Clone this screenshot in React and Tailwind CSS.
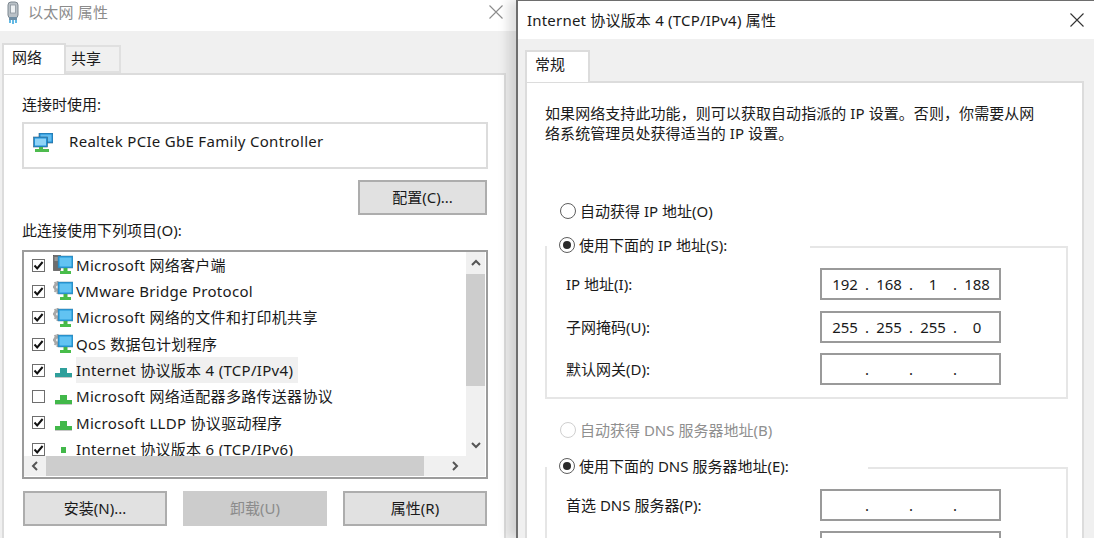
const FONT = "font-['Noto_Sans','Noto_Sans_CJK_SC',sans-serif]";

function CloseX({ color = "#8c8c8c" }) {
  return (
    <svg width="14" height="14" viewBox="0 0 14 14" fill="none" stroke={color} strokeWidth="1.1">
      <path d="M0.5 0.5 13.5 13.5M13.5 0.5 0.5 13.5" />
    </svg>
  );
}

function EthernetIcon() {
  return (
    <svg width="14" height="23" viewBox="0 0 14 23">
      <rect x="2" y="1" width="10" height="16" rx="3" fill="#b9c0c6" stroke="#7d8790" strokeWidth="1" />
      <rect x="4.5" y="4" width="5" height="8" fill="#eef1f3" stroke="#8a949c" strokeWidth="0.8" />
      <rect x="3" y="16" width="8" height="3" fill="#6f8da3" />
      <path d="M4 19v3M7 19v4M10 19v3" stroke="#31a3dc" strokeWidth="1.5" />
    </svg>
  );
}

function AdapterIcon() {
  return (
    <svg width="20" height="20" viewBox="0 0 20 20">
      <rect x="6" y="0" width="14" height="10" fill="#1f8fd6" stroke="#35617f" strokeWidth="0.6" />
      <rect x="7.5" y="1.5" width="11" height="7" fill="#62bdf0" />
      <rect x="0.5" y="4" width="14" height="10" fill="#1f8fd6" stroke="#35617f" strokeWidth="0.6" />
      <rect x="2" y="5.5" width="11" height="7" fill="#8fd4f7" />
      <rect x="6" y="14" width="4" height="3" fill="#4fb84f" />
      <rect x="2" y="16" width="14" height="3" fill="#4ebb4e" />
    </svg>
  );
}

function ClientIcon({ server }) {
  return (
    <svg width="20" height="20" viewBox="0 0 20 20" className="shrink-0">
      {server ? (
        <g>
          <rect x="0.5" y="0.5" width="7" height="15" fill="#6d6d6d" stroke="#444" strokeWidth="0.6" />
          <path d="M1.5 3h4M1.5 5h4" stroke="#d8d8d8" strokeWidth="0.8" />
        </g>
      ) : (
        <g fill="#a8a8a8">
          <circle cx="4.5" cy="6" r="4.2" />
          <path d="M3.5 0h2v2.5h-2zM0 5h2.5v2H0zM3.5 10h2v3h-2zM0.8 1.8l1.4-1.4 1.6 1.6-1.4 1.4zM0.8 10.2l1.4 1.4 1.6-1.6-1.4-1.4z" />
          <circle cx="4.5" cy="6" r="1.6" fill="#e8e8e8" />
        </g>
      )}
      <rect x="5" y="1" width="15" height="12" fill="#2196d8" stroke="#45809f" strokeWidth="0.5" />
      <rect x="6.5" y="2.5" width="12" height="9" fill="#62c3f2" />
      <rect x="10.5" y="13" width="4" height="3" fill="#46b647" />
      <rect x="7" y="16" width="11" height="3" fill="#48bd4a" />
    </svg>
  );
}

function ProtocolIcon({ color = "#42b84a" }) {
  return (
    <svg width="20" height="20" viewBox="0 0 20 20" className="shrink-0">
      <rect x="7" y="8" width="7" height="5" fill={color} />
      <rect x="2" y="13" width="17" height="4" fill={color} />
      <rect x="2" y="17" width="17" height="1" fill="#c8c8c8" />
    </svg>
  );
}

function StubIcon() {
  return (
    <svg width="20" height="20" viewBox="0 0 20 20" className="shrink-0">
      <rect x="8" y="8" width="5" height="6" fill="#42b84a" />
    </svg>
  );
}

function Check({ checked }) {
  return (
    <span className="shrink-0 w-[13px] h-[13px] border border-[#6e6e6e] bg-white flex items-center justify-center">
      {checked && (
        <svg width="11" height="11" viewBox="0 0 11 11" fill="none" stroke="#111" strokeWidth="2">
          <path d="M1.5 5.5 4.2 8.4 9.6 2" />
        </svg>
      )}
    </span>
  );
}

function Chevron({ d }) {
  return (
    <svg width="12" height="12" viewBox="0 0 12 12" fill="none" stroke="#555" strokeWidth="2">
      <path d={d} />
    </svg>
  );
}

const rows = [
  { text: "Microsoft 网络客户端", on: true, icon: <ClientIcon server /> },
  { text: "VMware Bridge Protocol", on: true, icon: <ClientIcon /> },
  { text: "Microsoft 网络的文件和打印机共享", on: true, icon: <ClientIcon /> },
  { text: "QoS 数据包计划程序", on: true, icon: <ClientIcon /> },
  { text: "Internet 协议版本 4 (TCP/IPv4)", on: true, icon: <ProtocolIcon color="#2f9f9b" />, active: true },
  { text: "Microsoft 网络适配器多路传送器协议", on: false, icon: <ProtocolIcon /> },
  { text: "Microsoft LLDP 协议驱动程序", on: true, icon: <ProtocolIcon /> },
  { text: "Internet 协议版本 6 (TCP/IPv6)", on: true, icon: <StubIcon /> },
];

function Btn({ children, width, disabled }) {
  return (
    <div
      className={`h-[35px] flex items-center justify-center border-2 text-[15px] ${width} ${
        disabled ? "bg-[#cccccc] border-[#cccccc] text-[#8b8b8b]" : "bg-[#e1e1e1] border-[#adadad] text-[#1a1a1a]"
      }`}
    >
      {children}
    </div>
  );
}

function LeftDialog() {
  return (
    <div className="w-[516px] shrink-0 flex flex-col">
      <div className="h-[31px] shrink-0 bg-white flex items-center pl-[6px] pr-[13px] pb-[7px]">
        <EthernetIcon />
        <span className="ml-[8px] text-[15px] text-[#8c8c8c] tracking-[0.2px]">以太网 属性</span>
        <span className="ml-auto">
          <CloseX />
        </span>
      </div>
      <div className="flex-1 min-h-0 bg-[#f0f0f0] pl-[2px] pt-[12px] pr-[10px] flex flex-col">
        <div className="flex h-[30px] shrink-0 items-end">
          <div className="w-[64px] h-[31px] -mb-[1px] relative bg-white border-2 border-b-0 border-[#dcdcdc] text-[15px] text-[#1a1a1a] pl-[8px] pt-[1px]">
            网络
          </div>
          <div className="w-[55px] h-[28px] bg-[#f0f0f0] border-2 border-l-0 border-[#e0e0e0] text-[15px] text-[#1a1a1a] pl-[5px]">
            共享
          </div>
        </div>
        <div className="flex-1 min-h-0 bg-white border-t-2 border-l-2 border-r-2 border-[#dcdcdc] pl-[18px] pr-[16px] pt-[19px] flex flex-col">
          <div className="h-[20px] leading-[20px] text-[15px] text-[#1a1a1a]">连接时使用:</div>
          <div className="mt-[8px] h-[47px] border-2 border-[#dcdcdc] flex items-center pl-[9px]">
            <span className="-mt-[5px]">
              <AdapterIcon />
            </span>
            <span className="ml-[16px] text-[15px] tracking-[0.3px] text-[#1a1a1a] -mt-[8px]">Realtek PCIe GbE Family Controller</span>
          </div>
          <div className="mt-[11px] flex justify-end pr-[1px]">
            <Btn width="w-[129px]">配置(C)...</Btn>
          </div>
          <div className="mt-[5px] h-[20px] leading-[20px] text-[15px] text-[#1a1a1a]">此连接使用下列项目(O):</div>
          <div className="mt-[10px] h-[229px] shrink-0 border-2 border-[#9c9c9c] bg-white flex flex-col">
            <div className="flex flex-1 min-h-0">
              <div className="flex-1 min-w-0 overflow-hidden">
                {rows.map((r) => (
                  <div key={r.text} className="h-[26.3px] flex items-center pl-[8px]">
                    <Check checked={r.on} />
                    <span className="ml-[8px] flex">{r.icon}</span>
                    <span
                      className={`ml-[3px] h-full flex items-center text-[15px] tracking-[0.3px] text-[#1a1a1a] whitespace-nowrap pr-[5px] ${
                        r.active ? "bg-[#f0f0f0]" : ""
                      }`}
                    >
                      {r.text}
                    </span>
                  </div>
                ))}
              </div>
              <div className="w-[19px] shrink-0 bg-[#f0f0f0] flex flex-col items-center mr-[1px]">
                <div className="h-[22px] flex items-center justify-center">
                  <Chevron d="M2 8 6 4l4 4" />
                </div>
                <div className="h-[112px] w-full bg-[#cdcdcd]" />
                <div className="mt-auto h-[22px] flex items-center justify-center">
                  <Chevron d="M2 4l4 4 4-4" />
                </div>
              </div>
            </div>
            <div className="h-[20px] shrink-0 bg-[#f0f0f0] flex items-center mr-[1px] mb-[1px]">
              <div className="w-[22px] flex justify-center">
                <Chevron d="M8 2 4 6l4 4" />
              </div>
              <div className="w-[378px] h-full bg-[#cdcdcd]" />
              <div className="flex-1 flex justify-center">
                <Chevron d="M4 2l4 4-4 4" />
              </div>
            </div>
          </div>
          <div className="mt-[12px] flex justify-between px-[1px]">
            <Btn width="w-[144px]">安装(N)...</Btn>
            <Btn width="w-[144px]" disabled>卸载(U)</Btn>
            <Btn width="w-[144px]">属性(R)</Btn>
          </div>
        </div>
      </div>
    </div>
  );
}

function Radio({ checked, disabled }) {
  return (
    <span
      className={`shrink-0 w-[16px] h-[16px] rounded-full border-[1.5px] bg-white flex items-center justify-center ${
        disabled ? "border-[#cfcfcf]" : "border-[#5e5e5e]"
      }`}
    >
      {checked && <span className="w-[8px] h-[8px] rounded-full bg-[#2a2a2a]" />}
    </span>
  );
}

function Octets({ values }) {
  return (
    <div className="w-[181px] h-[32px] shrink-0 border-2 border-[#9a9a9a] bg-white flex items-center pl-[4px] text-[15px] text-[#1a1a1a]">
      {values.map((v, i) => (
        <span key={i} className="flex">
          <span className="w-[38px] text-center">{v}</span>
          {i < 3 && <span className="w-[6px] text-center">.</span>}
        </span>
      ))}
    </div>
  );
}

function Field({ label, values, className = "" }) {
  return (
    <div className={`flex items-center pl-[19px] ${className}`}>
      <span className="w-[254px] shrink-0 text-[15px] text-[#1a1a1a] whitespace-nowrap">{label}</span>
      <Octets values={values} />
    </div>
  );
}

function Legend({ children, width }) {
  return (
    <div className={`h-[20px] -mt-[13px] flex items-center bg-white pl-[12px] ${width}`}>
      <Radio checked />
      <span className="ml-[4px] text-[15px] text-[#1a1a1a] whitespace-nowrap">{children}</span>
    </div>
  );
}

function RightDialog() {
  const empty = ["", "", "", ""];
  return (
    <div className="flex-1 min-w-0 relative flex flex-col border-l-2 border-t border-[#6e6e6e] shadow-[-8px_0_10px_rgba(0,0,0,0.13)]">
      <div className="h-[38px] shrink-0 bg-white flex items-center pl-[9px] pr-[10px]">
        <span className="text-[15px] tracking-[0.2px] text-[#1a1a1a]">Internet 协议版本 4 (TCP/IPv4) 属性</span>
        <span className="ml-auto">
          <CloseX color="#333" />
        </span>
      </div>
      <div className="flex-1 min-h-0 bg-[#f0f0f0] pl-[7px] pr-[10px] pt-[11px] flex flex-col">
        <div className="w-[65px] h-[32px] -mb-[1px] relative shrink-0 bg-white border-2 border-b-0 border-[#dcdcdc] text-[15px] text-[#1a1a1a] pl-[8px] pt-[1px]">
          常规
        </div>
        <div className="flex-1 min-h-0 overflow-hidden bg-white border-t-2 border-l-2 border-r-2 border-[#dcdcdc] pl-[18px] pr-[14px] pt-[20px]">
          <div className="pr-[14px] text-[15px] tracking-[0.07px] leading-[20px] text-[#1a1a1a] whitespace-nowrap">
            <div>如果网络支持此功能，则可以获取自动指派的 IP 设置。否则，你需要从网</div>
            <div>络系统管理员处获得适当的 IP 设置。</div>
          </div>
          <div className="mt-[58px] h-[20px] flex items-center pl-[15px]">
            <Radio />
            <span className="ml-[4px] text-[15px] text-[#1a1a1a]">自动获得 IP 地址(O)</span>
          </div>
          <div className="mt-[25px] h-[153px] shrink-0 border-2 border-[#e6e6e6]">
            <Legend width="w-[263px]">使用下面的 IP 地址(S):</Legend>
            <Field className="mt-[13px]" label="IP 地址(I):" values={["192", "168", "1", "188"]} />
            <Field className="mt-[11px]" label="子网掩码(U):" values={["255", "255", "255", "0"]} />
            <Field className="mt-[10px]" label="默认网关(D):" values={empty} />
          </div>
          <div className="mt-[21px] h-[20px] flex items-center pl-[15px]">
            <Radio disabled />
            <span className="ml-[4px] text-[15px] text-[#8f8f8f]">自动获得 DNS 服务器地址(B)</span>
          </div>
          <div className="mt-[27px] h-[120px] border-2 border-b-0 border-[#e6e6e6]">
            <Legend width="w-[321px]">使用下面的 DNS 服务器地址(E):</Legend>
            <Field className="mt-[13px]" label="首选 DNS 服务器(P):" values={empty} />
            <Field className="mt-[10px]" label="" values={[]} />
          </div>
        </div>
      </div>
    </div>
  );
}

export default function App() {
  return (
    <div className={`w-[1094px] h-[538px] overflow-hidden bg-white flex ${FONT}`}>
      <LeftDialog />
      <RightDialog />
    </div>
  );
}
